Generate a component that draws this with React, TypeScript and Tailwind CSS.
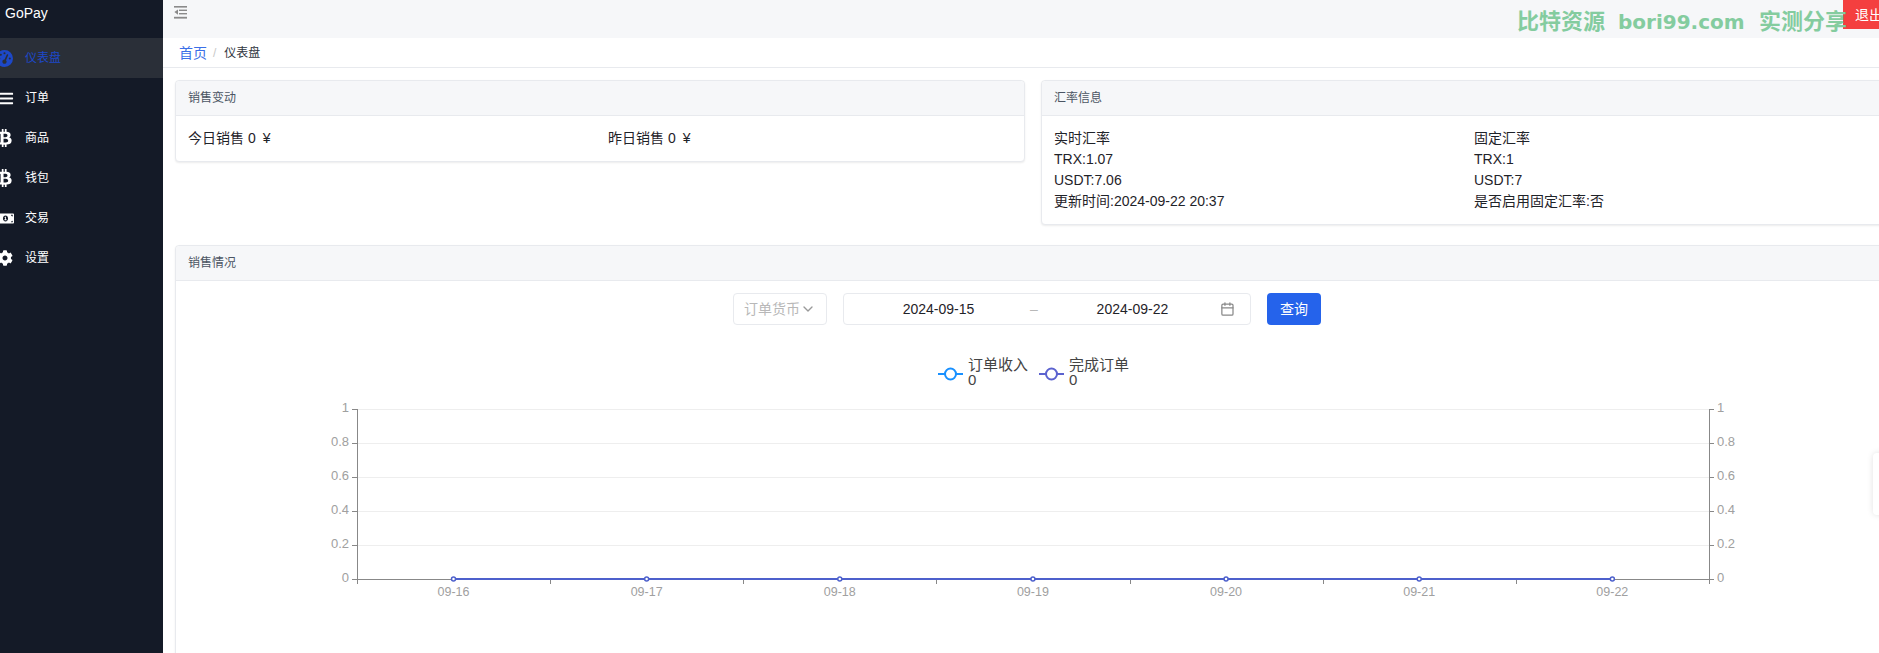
import { ReactNode } from "react";
import { FaBars, FaBtc, FaCog, FaMoneyBillAlt } from "react-icons/fa";
import { FaGaugeHigh } from "react-icons/fa6";
import { FiCalendar, FiChevronDown } from "react-icons/fi";

const menu = [
  { label: "仪表盘", icon: <FaGaugeHigh size={17} />, active: true, shift: "ml-[-4px] w-[29px]" },
  { label: "订单", icon: <FaBars size={15} />, shift: "ml-[-1px] w-[26px]" },
  { label: "商品", icon: <FaBtc size={18} />, shift: "ml-[-4px] w-[29px]" },
  { label: "钱包", icon: <FaBtc size={18} />, shift: "ml-[-4px] w-[29px]" },
  { label: "交易", icon: <FaMoneyBillAlt size={17} />, shift: "ml-[-3px] w-[28px]" },
  { label: "设置", icon: <FaCog size={16} />, shift: "ml-[-3px] w-[28px]" },
];

const yLabels = ["1", "0.8", "0.6", "0.4", "0.2", "0"];
const days = ["09-16", "09-17", "09-18", "09-19", "09-20", "09-21", "09-22"];
const xStep = 193.14;

function Card({ title, className, children }: { title: string; className?: string; children: ReactNode }) {
  return (
    <section className={`rounded border border-[#e8eaee] bg-white shadow-[0_1px_2px_rgba(0,0,0,0.08)] ${className ?? ""}`}>
      <div className="flex h-[35px] items-center rounded-t border-b border-[#e8eaee] bg-[#f6f7f9] px-3 text-xs text-[#4b5563]">
        {title}
      </div>
      {children}
    </section>
  );
}

function SalesChart() {
  return (
    <svg viewBox="176 325 1714 300" className="h-[300px] w-[1714px]">
      <line x1="938" x2="963" y1="374" y2="374" stroke="#1890ff" strokeWidth="2" />
      <circle cx="950.5" cy="374" r="5.5" fill="#fff" stroke="#1890ff" strokeWidth="2" />
      <text x="968" y="370" fontSize="15" fill="#444">订单收入</text>
      <text x="968" y="385" fontSize="15" fill="#444">0</text>
      <line x1="1039" x2="1064" y1="374" y2="374" stroke="#5b62cf" strokeWidth="2" />
      <circle cx="1051.5" cy="374" r="5.5" fill="#fff" stroke="#5b62cf" strokeWidth="2" />
      <text x="1069" y="370" fontSize="15" fill="#444">完成订单</text>
      <text x="1069" y="385" fontSize="15" fill="#444">0</text>

      {yLabels.map((label, i) => {
        const y = 409.5 + i * 34;
        return (
          <g key={label}>
            {i < 5 && <line x1="357" x2="1709" y1={y} y2={y} stroke="#eeeeee" />}
            <line x1="352" x2="357" y1={y} y2={y} stroke="#888" />
            <line x1="1709" x2="1714" y1={y} y2={y} stroke="#888" />
            <text x="349" y={y + 2.5} fontSize="13" fill="#a0a0a0" textAnchor="end">{label}</text>
            <text x="1717" y={y + 2.5} fontSize="13" fill="#a0a0a0">{label}</text>
          </g>
        );
      })}

      <line x1="357.5" x2="357.5" y1="409" y2="579" stroke="#888" />
      <line x1="1709.5" x2="1709.5" y1="409" y2="579" stroke="#888" />
      <line x1="357" x2="1710" y1="579.5" y2="579.5" stroke="#888" />
      {Array.from({ length: 8 }, (_, i) => {
        const x = Math.round(357 + i * xStep) + 0.5;
        return <line key={i} x1={x} x2={x} y1="579" y2="584" stroke="#888" />;
      })}

      <line x1="453.5" x2="1612" y1="579" y2="579" stroke="#4d60cc" strokeWidth="2" />
      {days.map((day, i) => {
        const x = 453.5 + i * xStep;
        return (
          <g key={day}>
            <circle cx={x} cy="579" r="2" fill="#fff" stroke="#4d60cc" strokeWidth="1.5" />
            <text x={x} y="596" fontSize="12.5" fill="#a0a0a0" textAnchor="middle">{day}</text>
          </g>
        );
      })}
    </svg>
  );
}

export default function App() {
  return (
    <div className="relative flex h-[653px] w-[1879px] overflow-hidden bg-white font-['Liberation_Sans','Noto_Sans_CJK_SC',sans-serif] text-sm text-[#1f2329]">
      <aside className="w-[163px] shrink-0 overflow-hidden bg-[#141a27] text-white">
        <div className="flex h-[38px] items-start pl-[5px] pt-[4px] text-sm leading-[18px]">GoPay</div>
        {menu.map((item) => (
          <div
            key={item.label}
            className={`flex h-10 items-center text-xs ${item.active ? "bg-[#2a2f38] text-[#1d48c8]" : "text-white"}`}
          >
            <span className={`flex items-center justify-start ${item.shift}`}>{item.icon}</span>
            {item.label}
          </div>
        ))}
      </aside>

      <main className="w-[1740px] shrink-0">
        <header className="flex h-[38px] items-start justify-between bg-[#f6f7f9] pl-[11px] pr-2">
          <svg width="13" height="13" viewBox="0 0 13 13" className="mt-[6px]" fill="#8a8a8a">
            <rect x="0" y="0" width="13" height="1.6" />
            <rect x="5" y="3.6" width="8" height="1.4" />
            <rect x="5" y="7" width="8" height="1.4" />
            <rect x="0" y="10.8" width="13" height="1.8" />
            <path d="M4 3.4V8.8L0.4 6.1Z" />
          </svg>
          <button className="h-[29px] bg-[#f43f3f] px-3 text-sm text-white">退出</button>
        </header>

        <nav className="flex h-[30px] items-center border-b border-[#e8eaee] pl-4">
          <span className="text-sm text-[#3b6fe8]">首页</span>
          <span className="ml-[6px] mr-[8px] text-xs text-[#c8c8c8]">/</span>
          <span className="text-xs text-[#303540]">仪表盘</span>
        </nav>

        <div className="px-3 pt-3">
          <div className="flex items-start gap-4">
            <Card title="销售变动" className="w-[850px]">
              <div className="flex px-3 py-[12px] leading-[21px]">
                <div className="w-[420px]">
                  今日销售 0<span className="ml-[7px]">¥</span>
                </div>
                <div>
                  昨日销售 0<span className="ml-[7px]">¥</span>
                </div>
              </div>
            </Card>
            <Card title="汇率信息" className="w-[850px]">
              <div className="flex px-3 py-[12px] leading-[21px]">
                <div className="w-[420px]">
                  <div>实时汇率</div>
                  <div>TRX:1.07</div>
                  <div>USDT:7.06</div>
                  <div>更新时间:2024-09-22 20:37</div>
                </div>
                <div>
                  <div>固定汇率</div>
                  <div>TRX:1</div>
                  <div>USDT:7</div>
                  <div>是否启用固定汇率:否</div>
                </div>
              </div>
            </Card>
          </div>

          <Card title="销售情况" className="mt-5 h-[500px]">
            <div className="flex items-center justify-center gap-4 pr-[12px] pt-3">
              <div className="flex h-8 w-[94px] items-center rounded border border-[#e8eaee] pl-[10px] text-[#b8b8b8]">
                订单货币
                <FiChevronDown size={16} className="shrink-0 text-[#999]" />
              </div>
              <div className="flex h-8 w-[408px] items-center rounded border border-[#e8eaee] pr-[15px]">
                <span className="w-[200px] pl-[3px] text-center">2024-09-15</span>
                <span className="text-[#b8b8b8]">–</span>
                <span className="w-[196px] pl-[7px] text-center">2024-09-22</span>
                <FiCalendar size={16} className="ml-auto text-[#888]" />
              </div>
              <button className="h-8 w-[54px] rounded bg-[#2563eb] text-white">查询</button>
            </div>
            <SalesChart />
          </Card>
        </div>
      </main>

      <div className="absolute left-[1517px] top-[12px] flex items-center font-['DejaVu_Sans','Noto_Sans_CJK_SC',sans-serif] text-[20px] font-bold leading-[20px] text-[#84cc9f]">
        <span className="w-[101px] text-[22px]">比特资源</span>
        <span className="w-[141px]">bori99.com</span>
        <span className="text-[22px]">实测分享</span>
      </div>

      <div className="absolute left-[1873px] top-[453px] h-[62px] w-3 rounded-l bg-white shadow-[0_0_6px_rgba(0,0,0,0.12)]" />
    </div>
  );
}
